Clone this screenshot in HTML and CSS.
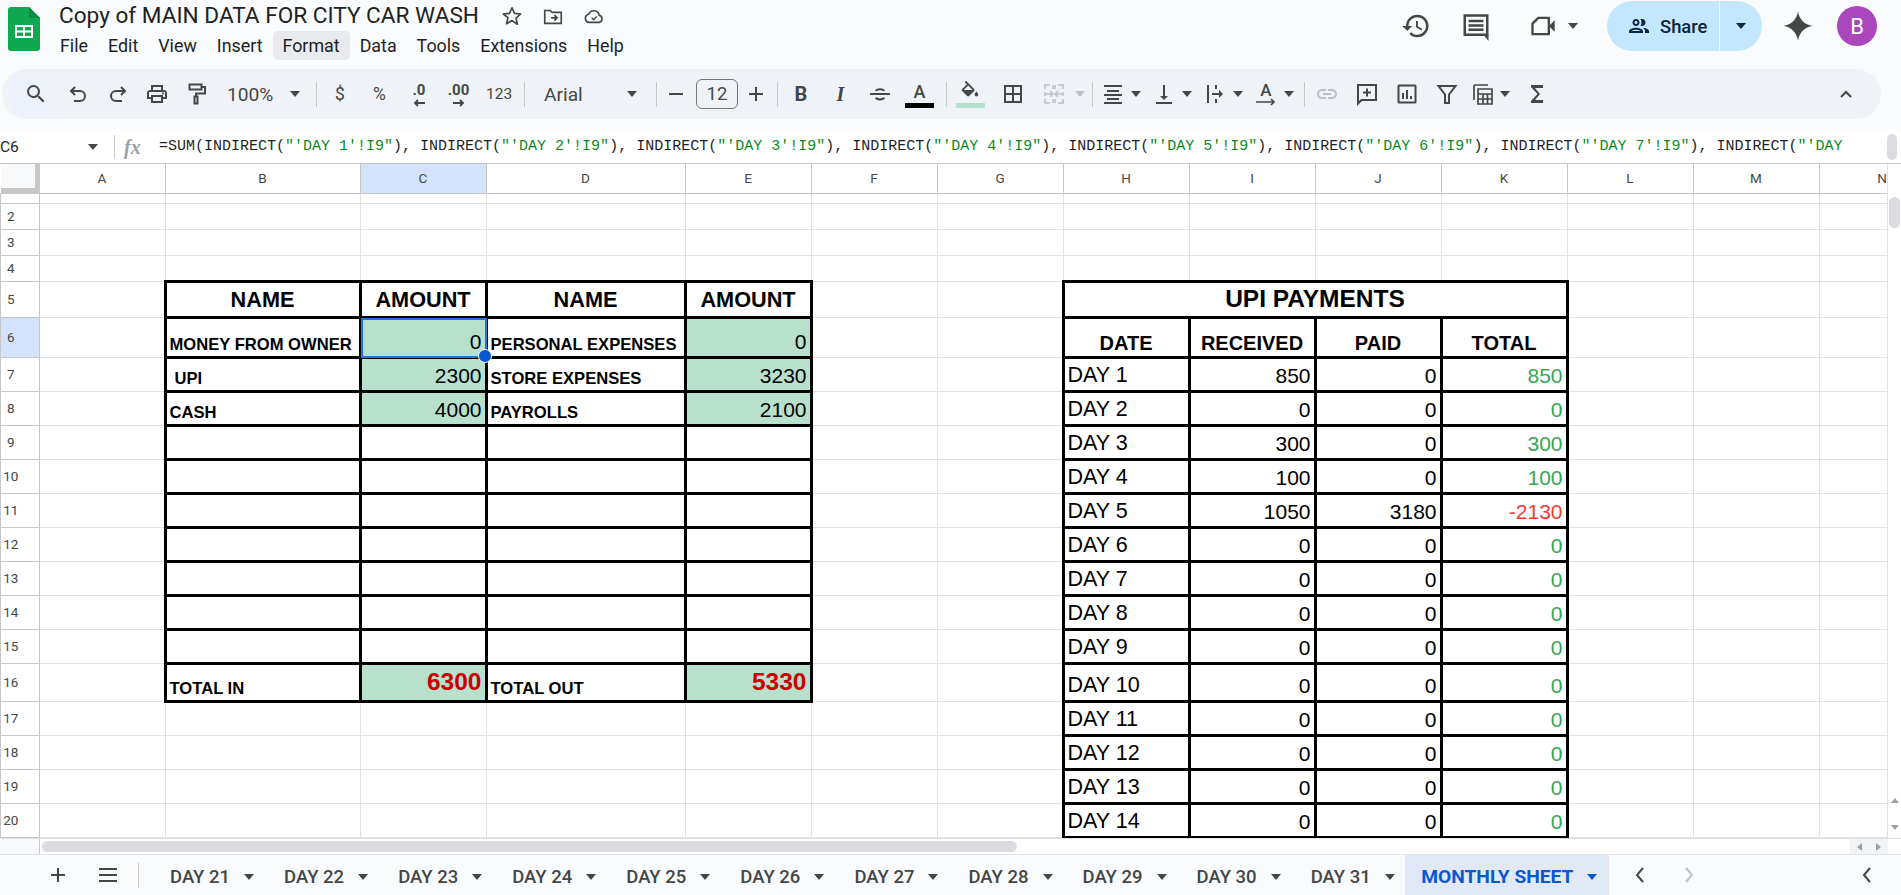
FILE: index.html
```html
<!DOCTYPE html>
<html lang="en">
<head>
<meta charset="utf-8">
<title>Copy of MAIN DATA FOR CITY CAR WASH</title>
<link rel="stylesheet" href="styles.css">
</head>
<body>
<header class="top">
  <div class="head">
    <svg class="logo" viewBox="0 0 32 44"><path fill="#0fa750" d="M3 0H21L32 11V41a3 3 0 0 1-3 3H3a3 3 0 0 1-3-3V3a3 3 0 0 1 3-3z"/><path fill="#0b8a43" d="M21 0L32 11H21z"/><path fill="#fff" d="M7 18h18v13H7z"/><path fill="#0fa750" d="M9 20h6v3.500H9zM17 20h6v3.500h-6zM9 25.500h6V29H9zM17 25.500h6V29h-6z"/></svg>
    <div class="doc">
      <div class="title-row">
        <span class="title">Copy of MAIN DATA FOR CITY CAR WASH</span>
        <svg class="ti star" viewBox="0 0 24 24"><path fill="none" stroke="#444746" stroke-width="1.800" stroke-linejoin="round" d="M12 3l2.700 6.200 6.800.6-5.100 4.500 1.500 6.700L12 17l-5.900 3.500 1.500-6.700L2.500 9.800l6.800-.6z"/></svg>
        <svg class="ti folder" viewBox="0 0 24 24"><path fill="none" stroke="#444746" stroke-width="1.800" d="M3 6h6l2 2h10v12H3z"/><path fill="none" stroke="#444746" stroke-width="1.800" d="M10 14h6M13.500 11l3 3-3 3"/></svg>
        <svg class="ti cloud" viewBox="0 0 24 24"><path fill="none" stroke="#444746" stroke-width="1.800" d="M7 19a4.500 4.500 0 0 1-.8-8.900 6 6 0 0 1 11.500 1.100A4 4 0 0 1 17.500 19z"/><path fill="none" stroke="#444746" stroke-width="1.600" d="M9.500 14l2 2 3.500-3.500"/></svg>
      </div>
      <nav class="menu">
        <span class="mi">File</span><span class="mi">Edit</span><span class="mi">View</span><span class="mi">Insert</span><span class="mi active">Format</span><span class="mi">Data</span><span class="mi">Tools</span><span class="mi">Extensions</span><span class="mi">Help</span>
      </nav>
    </div>
    <div class="actions">
      <svg class="ai a-hist" viewBox="0 0 24 24"><path fill="#444746" d="M13 3a9 9 0 0 0-9 9H1l3.890 3.890.07.14L9 12H6c0-3.870 3.130-7 7-7s7 3.130 7 7-3.130 7-7 7c-1.930 0-3.680-.79-4.940-2.060l-1.420 1.420A8.954 8.954 0 0 0 13 21a9 9 0 0 0 0-18zm-1 5v5l4.280 2.540.72-1.210-3.500-2.080V8H12z"/></svg>
      <svg class="ai a-comment" viewBox="0 0 24 24"><path fill="none" stroke="#444746" stroke-width="2" d="M3 3.500h18v15.500H3z"/><path fill="#444746" d="M18 19h4v5zM6 7h12v2H6zM6 10.500h12v2H6zM6 14h12v2H6z"/></svg>
      <svg class="ai a-video" viewBox="0 0 24 24"><path fill="none" stroke="#444746" stroke-width="2" stroke-linejoin="round" d="M8 5h9v14H3V10z"/><path fill="#444746" d="M17 12l5-5v10z"/></svg>
      <span class="caret a-caret"></span>
      <div class="share">
        <span class="share-main"><svg class="people" viewBox="0 0 24 24"><path fill="#0b2540" d="M9 13.750c-2.340 0-7 1.170-7 3.500V19h14v-1.750c0-2.330-4.660-3.500-7-3.500zM4.340 17c.84-.58 2.870-1.250 4.660-1.250s3.820.67 4.660 1.250H4.340zM9 12c1.930 0 3.500-1.570 3.500-3.500S10.930 5 9 5 5.500 6.570 5.500 8.500 7.070 12 9 12zm0-5c.83 0 1.500.67 1.500 1.500S9.830 10 9 10s-1.500-.67-1.500-1.500S8.170 7 9 7zm7.040 6.810c1.160.84 1.960 1.960 1.960 3.440V19h4v-1.750c0-2.020-3.500-3.170-5.960-3.440zM15 12c1.930 0 3.500-1.570 3.500-3.500S16.930 5 15 5c-.54 0-1.040.13-1.500.35.63.89 1 1.980 1 3.150s-.37 2.260-1 3.150c.46.22.96.35 1.500.35z"/></svg>Share</span>
        <span class="share-more"><span class="caret dark"></span></span>
      </div>
      <svg class="gemini" viewBox="0 0 24 24"><path fill="#444746" d="M12 1C12.800 7 17 11.200 23 12 17 12.800 12.800 17 12 23 11.200 17 7 12.800 1 12 7 11.200 11.200 7 12 1z"/></svg>
      <span class="avatar">B</span>
    </div>
  </div>

  <div class="toolbar">
    <span class="tbtn search"><svg class="ic" viewBox="0 0 24 24"><path d="M15.500 14h-.79l-.28-.27A6.471 6.471 0 0 0 16 9.500 6.500 6.500 0 1 0 9.500 16c1.610 0 3.090-.59 4.230-1.570l.27.28v.79l5 4.990L20.490 19l-4.990-5zm-6 0C7.010 14 5 11.990 5 9.500S7.010 5 9.500 5 14 7.010 14 9.500 11.990 14 9.500 14z"/></svg></span>
    <div class="group hist">
      <svg class="ic" viewBox="0 0 24 24"><path class="st" d="M9 5L5 9l4 4M5 9h9a5 5 0 0 1 0 10H8"/></svg>
      <svg class="ic" viewBox="0 0 24 24"><path class="st" d="M15 5l4 4-4 4M19 9h-9a5 5 0 0 0 0 10h6"/></svg>
      <svg class="ic" viewBox="0 0 24 24"><path d="M19 8h-1V3H6v5H5c-1.660 0-3 1.340-3 3v6h4v4h12v-4h4v-6c0-1.660-1.340-3-3-3zM8 5h8v3H8V5zm8 12v2H8v-4h8v2zm2-2v-2H6v2H4v-4c0-.55.45-1 1-1h14c.55 0 1 .45 1 1v4h-2z"/><circle cx="18" cy="11.500" r="1"/></svg>
      <svg class="ic" viewBox="0 0 24 24"><path class="st" d="M4.500 2.500h12v5h-12zM16.500 5h3.500v6.500h-9V14M9.500 14.500h3v7h-3z"/></svg>
    </div>
    <span class="zoom-val">100%</span><span class="caret"></span>
    <span class="sep s-zoom"></span>
    <div class="group fmt">
      <span class="tx">$</span>
      <span class="tx">%</span>
      <span class="dec">.0<svg viewBox="0 0 12 8"><path class="st" d="M12 4H2M5 1L2 4l3 3"/></svg></span>
      <span class="dec">.00<svg viewBox="0 0 12 8"><path class="st" d="M0 4h10M7 1l3 3-3 3"/></svg></span>
      <span class="tx small">123</span>
    </div>
    <span class="sep s-fmt"></span>
    <span class="font-name">Arial</span><span class="caret"></span>
    <span class="sep s-font"></span>
    <svg class="ic minus" viewBox="0 0 24 24"><path d="M5 11h14v2H5z"/></svg>
    <span class="size">12</span>
    <svg class="ic plus" viewBox="0 0 24 24"><path d="M19 13h-6v6h-2v-6H5v-2h6V5h2v6h6z"/></svg>
    <span class="sep s-size"></span>
    <div class="group text">
      <span class="tx bold">B</span>
      <span class="tx ital">I</span>
      <svg class="ic" viewBox="0 0 24 24"><path d="M2 11h20v2H2z"/><path class="st" d="M8 9c.5-2.500 7.500-2.500 8 0M8 15.500c.5 2.500 7.500 2.500 8 0"/></svg>
      <span class="colored"><span class="a-letter">A</span><span class="bar black"></span></span>
    </div>
    <span class="sep s-text"></span>
    <span class="colored fill"><svg class="ic-fill" viewBox="0 0 24 20"><path d="M16.560 8.940L7.620 0 6.210 1.410l2.380 2.380-5.150 5.150c-.59.59-.59 1.540 0 2.120l5.500 5.500c.29.29.68.44 1.060.44s.77-.15 1.060-.44l5.500-5.500c.59-.58.59-1.530 0-2.120zM5.210 10L10 5.210 14.790 10H5.210zM19 11.500s-2 2.170-2 3.500c0 1.100.9 2 2 2s2-.9 2-2c0-1.330-2-3.500-2-3.500z"/></svg><span class="bar green"></span></span>
    <svg class="ic borders" viewBox="0 0 24 24"><path d="M3 3v18h18V3H3zm8 16H5v-6h6v6zm0-8H5V5h6v6zm8 8h-6v-6h6v6zm0-8h-6V5h6v6z"/></svg>
    <svg class="ic merge off" viewBox="0 0 24 24"><path class="st" d="M3 7V3h5M16 3h5v4M3 17v4h5M16 21h5v-4M3 10v4M21 10v4M11 3v4M13 3v4M11 17v4M13 17v4M4 12h6M8 9l3 3-3 3M20 12h-6M16 9l-3 3 3 3"/></svg>
    <span class="caret off merge-caret"></span>
    <span class="sep s-merge"></span>
    <div class="group align">
      <span class="dd"><svg class="ic" viewBox="0 0 24 24"><path d="M3 3h18v2H3zM6 8h12v2H6zM3 12h18v2H3zM6 16h12v2H6zM3 20h18v2H3z"/></svg><span class="caret"></span></span>
      <span class="dd"><svg class="ic" viewBox="0 0 24 24"><path d="M4 20h16v2H4zM11 3h2v11h3l-4 4-4-4h3z"/></svg><span class="caret"></span></span>
      <span class="dd"><svg class="ic" viewBox="0 0 24 24"><path d="M4 3h2v18H4zM12 3h2v4h-2zM12 17h2v4h-2zM9 11h7V8l4 4-4 4v-3H9z"/></svg><span class="caret"></span></span>
      <span class="dd"><span class="rot"><span class="rot-a">A</span><svg viewBox="0 0 20 8"><path class="st" d="M0 4h18M15 1l3 3-3 3"/></svg></span><span class="caret"></span></span>
    </div>
    <span class="sep s-align"></span>
    <div class="group insert">
      <svg class="ic off" viewBox="0 0 24 24"><path d="M3.900 12c0-1.710 1.390-3.100 3.100-3.100h4V7H7c-2.760 0-5 2.240-5 5s2.240 5 5 5h4v-1.900H7c-1.710 0-3.100-1.390-3.100-3.100zM8 13h8v-2H8v2zm9-6h-4v1.900h4c1.710 0 3.100 1.390 3.100 3.100s-1.390 3.100-3.100 3.100h-4V17h4c2.760 0 5-2.240 5-5s-2.240-5-5-5z"/></svg>
      <svg class="ic" viewBox="0 0 24 24"><path class="st" d="M3 3h18v15H6.500L3 21.500zM12 6.500v8M8 10.500h8"/></svg>
      <svg class="ic" viewBox="0 0 24 24"><path class="st" d="M4 3.500h16a.5.500 0 0 1 .5.500v16a.5.500 0 0 1-.5.500H4a.5.500 0 0 1-.5-.5V4a.5.500 0 0 1 .5-.5z"/><path d="M7 11h2v6H7zM11 8h2v9h-2zM15 14h2v3h-2z"/></svg>
      <svg class="ic" viewBox="0 0 24 24"><path class="st" d="M3.500 4h17L14 12.500V21h-4v-8.500z"/></svg>
    </div>
    <span class="dd funcs"><svg class="ic" viewBox="0 0 24 24"><path class="st" d="M3 18V4a1 1 0 0 1 1-1h13M7 7h14v15H7zM7 12h14M7 17h14M12 12v10M16.500 12v10"/></svg><span class="caret"></span></span>
    <svg class="ic sigma" viewBox="0 0 24 24"><path d="M18 3H6v2l6.500 7L6 19v2h12v-3h-8l5-6-5-6h8z"/></svg>
    <svg class="ic collapse" viewBox="0 0 24 24"><path class="st" d="M7 15l5-5 5 5"/></svg>
  </div>
</header>

<div class="fbar">
  <span class="namebox">C6</span><span class="caret"></span>
  <span class="sep s-name"></span>
  <span class="fx">fx</span>
  <div class="formula">=SUM(INDIRECT(<b>"'DAY 1'!I9"</b>), INDIRECT(<b>"'DAY 2'!I9"</b>), INDIRECT(<b>"'DAY 3'!I9"</b>), INDIRECT(<b>"'DAY 4'!I9"</b>), INDIRECT(<b>"'DAY 5'!I9"</b>), INDIRECT(<b>"'DAY 6'!I9"</b>), INDIRECT(<b>"'DAY 7'!I9"</b>), INDIRECT(<b>"'DAY</b></div>
  <span class="fbar-thumb"></span>
</div>

<main class="sheet-area">
  <div class="grid-wrap">
    <table class="grid">
      <colgroup><col class="c-h"><col class="c-a"><col class="c-b"><col class="c-a"><col class="c-d"><col class="c-a"><col class="c-a"><col class="c-a"><col class="c-a"><col class="c-a"><col class="c-a"><col class="c-a"><col class="c-a"><col class="c-a"><col class="c-a"></colgroup>
      <thead><tr class="hdr"><th class="corner"></th><th>A</th><th>B</th><th class="sel">C</th><th>D</th><th>E</th><th>F</th><th>G</th><th>H</th><th>I</th><th>J</th><th>K</th><th>L</th><th>M</th><th>N</th></tr></thead>
      <tbody>
        <tr class="r10"><th></th><td></td><td></td><td></td><td></td><td></td><td></td><td></td><td></td><td></td><td></td><td></td><td></td><td></td><td></td></tr>
        <tr class="r26"><th>2</th><td></td><td></td><td></td><td></td><td></td><td></td><td></td><td></td><td></td><td></td><td></td><td></td><td></td><td></td></tr>
        <tr class="r26"><th>3</th><td></td><td></td><td></td><td></td><td></td><td></td><td></td><td></td><td></td><td></td><td></td><td></td><td></td><td></td></tr>
        <tr class="r26"><th>4</th><td></td><td></td><td></td><td></td><td></td><td></td><td></td><td></td><td></td><td></td><td></td><td></td><td></td><td></td></tr>
        <tr class="r36"><th>5</th><td></td><td class="x h1">NAME</td><td class="x h1">AMOUNT</td><td class="x h1">NAME</td><td class="x h1">AMOUNT</td><td></td><td></td><td class="x h2" colspan="4">UPI PAYMENTS</td><td></td><td></td><td></td></tr>
        <tr class="r40"><th class="sel">6</th><td></td><td class="x lb">MONEY FROM OWNER</td><td class="x n g cur">0</td><td class="x lb">PERSONAL EXPENSES</td><td class="x n g">0</td><td></td><td></td><td class="x h3">DATE</td><td class="x h3">RECEIVED</td><td class="x h3">PAID</td><td class="x h3">TOTAL</td><td></td><td></td><td></td></tr>
        <tr class="r34"><th>7</th><td></td><td class="x lb in">UPI</td><td class="x n g">2300</td><td class="x lb">STORE EXPENSES</td><td class="x n g">3230</td><td></td><td></td><td class="x d">DAY 1</td><td class="x n">850</td><td class="x n">0</td><td class="x n pos">850</td><td></td><td></td><td></td></tr>
        <tr class="r34"><th>8</th><td></td><td class="x lb">CASH</td><td class="x n g">4000</td><td class="x lb">PAYROLLS</td><td class="x n g">2100</td><td></td><td></td><td class="x d">DAY 2</td><td class="x n">0</td><td class="x n">0</td><td class="x n pos">0</td><td></td><td></td><td></td></tr>
        <tr class="r34"><th>9</th><td></td><td class="x"></td><td class="x"></td><td class="x"></td><td class="x"></td><td></td><td></td><td class="x d">DAY 3</td><td class="x n">300</td><td class="x n">0</td><td class="x n pos">300</td><td></td><td></td><td></td></tr>
        <tr class="r34"><th>10</th><td></td><td class="x"></td><td class="x"></td><td class="x"></td><td class="x"></td><td></td><td></td><td class="x d">DAY 4</td><td class="x n">100</td><td class="x n">0</td><td class="x n pos">100</td><td></td><td></td><td></td></tr>
        <tr class="r34"><th>11</th><td></td><td class="x"></td><td class="x"></td><td class="x"></td><td class="x"></td><td></td><td></td><td class="x d">DAY 5</td><td class="x n">1050</td><td class="x n">3180</td><td class="x n neg">-2130</td><td></td><td></td><td></td></tr>
        <tr class="r34"><th>12</th><td></td><td class="x"></td><td class="x"></td><td class="x"></td><td class="x"></td><td></td><td></td><td class="x d">DAY 6</td><td class="x n">0</td><td class="x n">0</td><td class="x n pos">0</td><td></td><td></td><td></td></tr>
        <tr class="r34"><th>13</th><td></td><td class="x"></td><td class="x"></td><td class="x"></td><td class="x"></td><td></td><td></td><td class="x d">DAY 7</td><td class="x n">0</td><td class="x n">0</td><td class="x n pos">0</td><td></td><td></td><td></td></tr>
        <tr class="r34"><th>14</th><td></td><td class="x"></td><td class="x"></td><td class="x"></td><td class="x"></td><td></td><td></td><td class="x d">DAY 8</td><td class="x n">0</td><td class="x n">0</td><td class="x n pos">0</td><td></td><td></td><td></td></tr>
        <tr class="r34"><th>15</th><td></td><td class="x"></td><td class="x"></td><td class="x"></td><td class="x"></td><td></td><td></td><td class="x d">DAY 9</td><td class="x n">0</td><td class="x n">0</td><td class="x n pos">0</td><td></td><td></td><td></td></tr>
        <tr class="r38"><th>16</th><td></td><td class="x lb">TOTAL IN</td><td class="x n g tot">6300</td><td class="x lb">TOTAL OUT</td><td class="x n g tot">5330</td><td></td><td></td><td class="x d">DAY 10</td><td class="x n">0</td><td class="x n">0</td><td class="x n pos">0</td><td></td><td></td><td></td></tr>
        <tr class="r34"><th>17</th><td></td><td></td><td></td><td></td><td></td><td></td><td></td><td class="x d">DAY 11</td><td class="x n">0</td><td class="x n">0</td><td class="x n pos">0</td><td></td><td></td><td></td></tr>
        <tr class="r34"><th>18</th><td></td><td></td><td></td><td></td><td></td><td></td><td></td><td class="x d">DAY 12</td><td class="x n">0</td><td class="x n">0</td><td class="x n pos">0</td><td></td><td></td><td></td></tr>
        <tr class="r34"><th>19</th><td></td><td></td><td></td><td></td><td></td><td></td><td></td><td class="x d">DAY 13</td><td class="x n">0</td><td class="x n">0</td><td class="x n pos">0</td><td></td><td></td><td></td></tr>
        <tr class="r34"><th>20</th><td></td><td></td><td></td><td></td><td></td><td></td><td></td><td class="x d">DAY 14</td><td class="x n">0</td><td class="x n">0</td><td class="x n pos">0</td><td></td><td></td><td></td></tr>
      </tbody>
    </table>
  </div>
  <div class="vscroll">
    <span class="v-thumb"></span>
    <span class="v-arrows"><span class="tri up"></span><span class="tri down"></span></span>
  </div>
</main>

<div class="hscroll">
  <span class="h-corner"></span>
  <span class="h-thumb"></span>
  <span class="h-arrows"><span class="tri left"></span><span class="tri right"></span></span>
</div>

<footer class="tabs">
  <svg class="ic tab-add" viewBox="0 0 24 24"><path d="M19 13h-6v6h-2v-6H5v-2h6V5h2v6h6z"/></svg>
  <svg class="ic tab-all" viewBox="0 0 24 24"><path d="M3 5h18v2H3zM3 11h18v2H3zM3 17h18v2H3z"/></svg>
  <span class="sep s-tabs"></span>
  <span class="tab">DAY 21<span class="caret"></span></span>
  <span class="tab">DAY 22<span class="caret"></span></span>
  <span class="tab">DAY 23<span class="caret"></span></span>
  <span class="tab">DAY 24<span class="caret"></span></span>
  <span class="tab">DAY 25<span class="caret"></span></span>
  <span class="tab">DAY 26<span class="caret"></span></span>
  <span class="tab">DAY 27<span class="caret"></span></span>
  <span class="tab">DAY 28<span class="caret"></span></span>
  <span class="tab">DAY 29<span class="caret"></span></span>
  <span class="tab">DAY 30<span class="caret"></span></span>
  <span class="tab">DAY 31<span class="caret"></span></span>
  <span class="tab current">MONTHLY SHEET<span class="caret blue"></span></span>
  <svg class="ic tab-prev" viewBox="0 0 24 24"><path class="st" d="M15 5l-6 7 6 7"/></svg>
  <svg class="ic tab-next off" viewBox="0 0 24 24"><path class="st" d="M9 5l6 7-6 7"/></svg>
  <svg class="ic tab-side" viewBox="0 0 24 24"><path class="st" d="M15 5l-6 7 6 7"/></svg>
</footer>
</body>
</html>
```
FILE: styles.css
```css
* { box-sizing: border-box; }
html, body { margin: 0; height: 100%; }
body {
  width: 1901px;
  height: 895px;
  overflow: hidden;
  background: #fff;
  font-family: Roboto, "Liberation Sans", sans-serif;
  color: #1f1f1f;
}

/* caret */
.caret {
  flex: none;
  display: inline-block;
  width: 0;
  height: 0;
  border-left: 5px solid transparent;
  border-right: 5px solid transparent;
  border-top: 6px solid #444746;
}
.caret.dark { border-top-color: #0b2540; }
.caret.blue { border-top-color: #0b57d0; }
.caret.off { border-top-color: #bdc1c6; }

.sep { flex: none; width: 1px; height: 25px; background: #c7c7c7; }

/* header */
.top { background: #f9fbfd; height: 129px; }
.head { height: 69px; display: flex; position: relative; }
.logo { width: 32px; height: 44px; margin: 7px 0 0 8px; flex: none; }
.doc { margin-left: 10px; display: flex; flex-direction: column; }
.title-row { height: 31px; display: flex; align-items: center; padding-left: 9px; }
.title { font-size: 22.600px; color: #1f1f1f; width: 442px; white-space: nowrap; }
.ti { width: 22px; height: 22px; flex: none; margin-right: 19px; }
.menu { display: flex; height: 29px; }
.mi { display: flex; align-items: center; padding: 0 10px; font-size: 17.850px; color: #1f1f1f; border-radius: 5px; }
.mi.active { background: #e8eaed; }

.actions { margin-left: auto; display: flex; align-items: center; height: 52px; }
.ai { flex: none; }
.a-hist { width: 30px; height: 30px; margin-right: 30px; }
.a-comment { width: 30px; height: 30px; margin-right: 38px; }
.a-video { width: 28px; height: 28px; margin-right: 11px; }
.a-caret { margin-right: 29px; }
.share { width: 155px; height: 50px; display: flex; border-radius: 25px; overflow: hidden; background: #c2e7ff; color: #0b2540; flex: none; }
.share-main { width: 113px; border-right: 1px solid #f3f9fe; display: flex; align-items: center; padding-left: 20px; font-size: 18.400px; font-weight: 500; gap: 9px; }
.people { width: 24px; height: 24px; flex: none; }
.share-more { flex: 1; display: flex; align-items: center; justify-content: center; }
.gemini { width: 32px; height: 32px; margin-left: 20px; flex: none; }
.avatar { width: 40px; height: 40px; border-radius: 50%; margin: 0 24px 0 23px; background: #ab47bc; color: #fff; display: flex; align-items: center; justify-content: center; font-size: 22px; flex: none; }

/* toolbar */
.toolbar {
  margin: 0 20px 0 2px;
  height: 50px;
  border-radius: 25px;
  background: #eff3f8;
  display: flex;
  align-items: center;
  padding: 0 23px 0 10px;
  color: #444746;
}
.ic { width: 24px; height: 24px; flex: none; fill: #444746; display: block; }
.st { fill: none; stroke: #444746; stroke-width: 2; }
.ic.off { fill: #bdc1c6; }
.off .st { stroke: #bdc1c6; }
.group { display: flex; align-items: center; flex: none; }
.tbtn.search { width: 48px; height: 41px; display: flex; align-items: center; justify-content: center; background: #edf1fa; border-radius: 4px; flex: none; }
.hist { margin-left: 6px; gap: 15.500px; }
.zoom-val { width: 63px; margin-left: 18.500px; font-size: 19.200px; flex: none; }
.s-zoom { margin-left: 16px; }
.fmt { margin-left: 11px; gap: 15.500px; }
.tx { width: 24px; text-align: center; font-size: 17.500px; flex: none; }
.tx.small { font-size: 15.500px; }
.tx.bold { font-weight: 700; font-size: 20px; }
.tx.ital { font-style: italic; font-weight: 700; font-size: 20px; font-family: "Liberation Serif", serif; }
.dec { width: 24px; flex: none; display: flex; flex-direction: column; align-items: center; font-size: 15px; font-weight: 700; line-height: 14px; height: 24px; padding-top: 1px; white-space: nowrap; }
.dec svg { width: 12px; height: 8px; flex: none; margin-top: 2px; }
.dec .st { stroke-width: 1.800; }
.s-fmt { margin-left: 14px; }
.font-name { width: 83px; margin-left: 19px; font-size: 19.200px; flex: none; }
.s-font { margin-left: 19px; }
.minus { margin-left: 7px; }
.size { width: 42px; height: 30px; margin-left: 8px; border: 1px solid #747775; border-radius: 6px; display: flex; align-items: center; justify-content: center; font-size: 18.500px; flex: none; }
.plus { margin-left: 6px; }
.s-size { margin-left: 9px; }
.text { margin-left: 11px; gap: 15.500px; }
.colored { width: 24px; height: 41px; flex: none; display: flex; flex-direction: column; align-items: center; justify-content: flex-end; padding-bottom: 7px; }
.a-letter { font-size: 18px; line-height: 18px; margin-bottom: 2px; font-weight: 500; }
.bar { flex: none; width: 29px; height: 5px; }
.bar.black { background: #000; }
.bar.green { background: #b7e1cd; }
.s-text { margin-left: 14.500px; }
.fill { margin-left: 11px; }
.ic-fill { width: 22px; height: 20px; flex: none; fill: #444746; margin: 0 0 3px; }
.borders { margin-left: 19px; }
.merge { margin-left: 17px; }
.merge .st { stroke-width: 1.500; }
.merge-caret { margin-left: 9px; }
.s-merge { margin-left: 7px; }
.align { margin-left: 8px; gap: 11px; }
.dd { display: flex; align-items: center; gap: 6px; flex: none; }
.rot { width: 24px; height: 24px; display: flex; flex-direction: column; align-items: center; line-height: 16px; font-size: 17px; font-weight: 500; }
.rot svg { width: 20px; height: 8px; flex: none; }
.rot .st { stroke-width: 1.600; }
.s-align { margin-left: 10px; }
.insert { margin-left: 10px; gap: 16px; }
.funcs { margin-left: 12px; gap: 5px; }
.funcs .st { stroke-width: 1.700; }
.sigma { margin-left: 15px; }
.collapse { margin-left: auto; }

/* formula bar */
.fbar { height: 35px; display: flex; align-items: center; background: #fff; position: relative; border-bottom: 1px solid #c7c7c7; padding-top: 2px; }
.namebox { width: 88px; font-size: 15.500px; color: #1f1f1f; flex: none; }
.s-name { margin-left: 16px; height: 24px; }
.fx { width: 28px; margin-left: 9px; font: italic 700 20px "Liberation Serif", serif; color: #9aa0a6; flex: none; }
.formula { margin-left: 7px; font: 15px/20px "Liberation Mono", monospace; color: #1f1f1f; white-space: nowrap; flex: none; width: 1700px; overflow: hidden; }
.formula b { font-weight: 400; color: #0b8a1f; }
.fbar-thumb { position: absolute; right: 4px; top: 5px; width: 10px; height: 26px; border-radius: 5px; background: #dadce0; }

/* grid */
.sheet-area { display: flex; height: 674px; }
.grid-wrap { width: 1887px; height: 674px; overflow: hidden; flex: none; }
.grid { border-collapse: collapse; table-layout: fixed; width: 1944.500px; }
.c-h { width: 38.500px; }
.c-a { width: 126px; }
.c-b { width: 195px; }
.c-d { width: 199px; }
.grid th { padding: 0; font-weight: 400; font-family: Roboto, sans-serif; color: #444746; font-size: 13.500px; border: 1px solid #c7c7c7; background: #fff; overflow: hidden; }
.grid tbody th { text-align: center; padding: 0 18px 1px 0; border-right: 1px solid #c7c7c7; }
.grid td { padding: 0 4px; border: 1px solid #e1e1e1; white-space: nowrap; overflow: hidden; font-family: "Liberation Sans", Arial, sans-serif; color: #000; }
.hdr { height: 29px; }
.hdr th { border-top: 0; }
.grid .sel { background: #d3e3fd; }
.grid .corner { background: linear-gradient(#c7c7c7, #c7c7c7) right / 4px 100% no-repeat, linear-gradient(#c7c7c7, #c7c7c7) bottom / 100% 5px no-repeat, #f8f9fa; border: 0; }
.r10 { height: 10px; }
.r26 { height: 26px; }
.r34 { height: 34px; }
.r36 { height: 36px; }
.r38 { height: 38px; }
.r40 { height: 40px; }

.grid td.x { border: 3px solid #000; }
.grid td.h1 { font-size: 21.700px; font-weight: 700; text-align: center; padding-top: 2px; }
.h2 { font-size: 24.500px; font-weight: 700; text-align: center; }
.grid td.h3 { font-size: 20px; font-weight: 700; text-align: center; vertical-align: bottom; line-height: 20px; padding-bottom: 3px; }
.grid td.lb { font-size: 16.600px; font-weight: 700; vertical-align: bottom; line-height: 18px; padding: 0 3px 2px; }
.grid td.in { padding-left: 8px; }
.grid td.n { font-size: 21px; text-align: right; vertical-align: bottom; line-height: 21px; padding: 0 3px 4px 0; }
.grid td.d { font-size: 21.500px; vertical-align: bottom; line-height: 21px; padding: 0 0 4px 3px; }
.g { background: #b7e1cd; }
.grid td.n.pos { color: #34a853; }
.grid td.n.neg { color: #f23b30; }
.grid td.n.tot { color: #cc0000; font-weight: 700; font-size: 24.500px; line-height: 24px; padding-bottom: 6px; }
.grid td.cur { position: relative; overflow: visible; }
.cur::after { content: ""; position: absolute; inset: -1px -2px -2px -1px; border: 2px solid #1a73e8; }
.cur::before { content: ""; position: absolute; right: -7px; bottom: -7px; width: 12px; height: 12px; border-radius: 50%; background: #0b57d0; border: 1px solid #fff; z-index: 2; }

/* scrollbars */
.vscroll { flex: 1; background: #fff; border-left: 1px solid #e1e1e1; display: flex; flex-direction: column; align-items: center; padding-top: 33px; position: relative; }
.v-thumb { width: 11px; height: 31px; border-radius: 6px; background: #dadce0; }
.v-arrows { margin-top: auto; height: 48px; display: flex; flex-direction: column; justify-content: space-between; align-items: center; padding: 8px 0; }
.tri { display: block; width: 0; height: 0; border: 4px solid transparent; }
.tri.up { border-bottom: 5px solid #9aa0a6; border-top: 0; }
.tri.down { border-top: 5px solid #9aa0a6; border-bottom: 0; }
.tri.left { border-right: 5px solid #9aa0a6; border-left: 0; }
.tri.right { border-left: 5px solid #9aa0a6; border-right: 0; }
.hscroll { height: 16px; display: flex; align-items: center; background: #fff; border-top: 1px solid #e1e1e1; }
.h-corner { width: 40px; height: 100%; background: #f8f9fa; border-right: 1px solid #c7c7c7; flex: none; }
.h-thumb { width: 975px; height: 11px; margin-left: 2px; border-radius: 6px; background: #dadce0; flex: none; }
.h-arrows { margin-left: auto; width: 38px; margin-right: 13px; height: 100%; display: flex; align-items: center; justify-content: space-around; background: #f1f3f4; flex: none; }

/* tabs */
.tabs { height: 41px; background: #f9fbfd; border-top: 1px solid #e1e3e6; display: flex; align-items: center; }
.tab-add { margin-left: 46px; }
.tab-all { margin-left: 26px; }
.s-tabs { margin-left: 18px; margin-right: 15px; height: 25px; }
.tab { height: 100%; display: flex; align-items: center; padding: 3px 14px 0 16px; gap: 14px; font-size: 18.500px; font-weight: 500; color: #444746; white-space: nowrap; flex: none; }
.tab.current { background: #e1e9f7; color: #0b57d0; font-weight: 700; font-size: 19.200px; padding: 3px 12px 0 16px; gap: 14px; margin-left: -3.500px; }
.tab-prev { margin-left: 19px; }
.tab-next { margin-left: 25px; }
.tab-side { margin-left: auto; margin-right: 22px; }
```
